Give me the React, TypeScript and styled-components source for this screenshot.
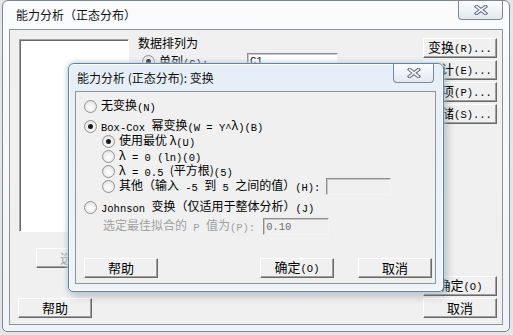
import React from 'react';
import styled, { createGlobalStyle } from 'styled-components';

const GlobalStyle = createGlobalStyle`
  html, body {
    margin: 0;
    padding: 0;
  }
  body {
    background: #e3e5e8;
    font-family: "Noto Sans CJK SC", "Liberation Sans", sans-serif;
    font-size: 12px;
    color: #000;
  }
`;

const Desktop = styled.div`
  position: relative;
  width: 513px;
  height: 335px;
  overflow: hidden;
`;

/* ---------- window chrome ---------- */

const MainWindow = styled.div`
  box-sizing: border-box;
  display: flex;
  flex-direction: column;
  width: 508px;
  height: 332px;
  margin-left: 2px;
  padding: 0 6px 6px;
  border: 1px solid #7c8794;
  border-radius: 6px 6px 5px 5px;
  background: linear-gradient(180deg, #fafbfd 0%, #f0f3f7 100%);
`;

const DialogWindow = styled.div`
  position: absolute;
  left: 68px;
  top: 63px;
  box-sizing: border-box;
  display: flex;
  flex-direction: column;
  width: 376px;
  height: 229px;
  padding: 0 7px 7px 6px;
  border: 1px solid #6d8197;
  border-radius: 6px 6px 5px 5px;
  background: linear-gradient(180deg, #e6eef7 0%, #eef4fa 100%);
  box-shadow: inset 0 0 0 1px rgba(255, 255, 255, 0.9), 0 0 4px 1px rgba(175, 215, 238, 0.9),
    3px 4px 10px rgba(0, 0, 0, 0.22);
`;

const TitleBar = styled.div<{ $h: number; $pad: number }>`
  display: flex;
  align-items: flex-start;
  height: ${p => p.$h}px;
  padding-left: ${p => p.$pad}px;
`;

const Title = styled.span<{ $h: number }>`
  line-height: ${p => p.$h}px;
  font-size: 12px;
  color: #111;
  white-space: nowrap;
`;

const CloseBox = styled.div<{ $w: number; $right?: number }>`
  display: flex;
  align-items: center;
  justify-content: center;
  width: ${p => p.$w}px;
  height: 19px;
  margin-left: auto;
  margin-right: ${p => p.$right ?? 0}px;
  box-sizing: border-box;
  border: 1px solid #7d8896;
  border-top: none;
  border-radius: 0 0 4px 4px;
  background: linear-gradient(180deg, #fbfcfd 0%, #e4e9ef 100%);
`;

const Client = styled.div<{ $column?: boolean }>`
  flex: 1;
  display: flex;
  flex-direction: ${p => (p.$column ? 'column' : 'row')};
  min-height: 0;
  border: 1px solid #8c949d;
  background: #f0f0f0;
`;

const CloseIcon = () => (
  <svg width="14" height="10" viewBox="0 0 14 10">
    <g strokeLinecap="square">
      <path d="M2.5 1.5 L11.5 8.5 M11.5 1.5 L2.5 8.5" stroke="#5f6a77" strokeWidth="3.6" />
      <path d="M2.5 1.5 L11.5 8.5 M11.5 1.5 L2.5 8.5" stroke="#f3f5f7" strokeWidth="1.6" />
    </g>
  </svg>
);

/* ---------- controls ---------- */

const Latin = styled.span<{ $shift?: number }>`
  font-family: "Liberation Mono", "DejaVu Sans Mono", monospace;
  font-size: 10.5px;
  vertical-align: ${p => p.$shift ?? -1}px;
`;

const PushButton = styled.button<{ $disabled?: boolean }>`
  display: flex;
  align-items: center;
  justify-content: center;
  width: 74px;
  height: 20px;
  padding: 0;
  box-sizing: border-box;
  border: 1px solid;
  border-color: #ffffff #696969 #696969 #ffffff;
  box-shadow: inset -1px -1px 0 #a0a0a0;
  background: #f0f0f0;
  font-family: "Noto Sans CJK SC", "Liberation Sans", sans-serif;
  font-size: 13px;
  white-space: nowrap;
  color: ${p => (p.$disabled ? '#a3a3a3' : '#000')};
`;

const ButtonLabel = styled.span`
  line-height: 18px;
`;

const TextField = styled.div<{ $w: number; $disabled?: boolean }>`
  display: flex;
  align-items: center;
  width: ${p => p.$w}px;
  height: 17px;
  box-sizing: border-box;
  padding-left: 2px;
  border: 1px solid;
  border-color: #8e8e8e #f4f4f4 #f4f4f4 #8e8e8e;
  box-shadow: inset 1px 1px 0 #c8c8c8;
  background: ${p => (p.$disabled ? '#f0f0f0' : '#ffffff')};
  color: ${p => (p.$disabled ? '#6d6d6d' : '#000')};
`;

const Radio = styled.span<{ $checked?: boolean }>`
  position: relative;
  flex: none;
  width: 13px;
  height: 13px;
  box-sizing: border-box;
  border: 1px solid #8f9296;
  border-radius: 50%;
  background: radial-gradient(circle at 50% 60%, #ffffff 0%, #f2f2f2 45%, #d6d6d6 100%);

  &::after {
    content: '';
    display: ${p => (p.$checked ? 'block' : 'none')};
    position: absolute;
    left: 3px;
    top: 3px;
    width: 5px;
    height: 5px;
    border-radius: 50%;
    background: #1c1c1c;
  }
`;

const OptionRow = styled.div<{ $indent?: number; $gap?: number }>`
  display: flex;
  align-items: center;
  gap: 4px;
  height: 15px;
  padding-left: ${p => p.$indent ?? 0}px;
  margin-top: ${p => p.$gap ?? 0}px;
  white-space: nowrap;
`;

const OptionText = styled.span<{ $muted?: boolean }>`
  font-size: 12px;
  line-height: 15px;
  color: ${p => (p.$muted ? '#a0a0a0' : '#000')};
`;

/* ---------- main dialog body ---------- */

const LeftColumn = styled.div`
  display: flex;
  flex-direction: column;
  align-items: flex-start;
  padding: 9px 0 6px 8px;
`;

const ListBox = styled.div`
  width: 110px;
  height: 193px;
  margin-left: 1px;
  box-sizing: border-box;
  border: 1px solid;
  border-color: #a0a0a0 #ffffff #ffffff #a0a0a0;
  box-shadow: inset 1px 1px 0 #696969;
  background: #ffffff;
`;

const SelectSlot = styled.div`
  margin: 16px 0 0 18px;
`;

const HelpSlot = styled.div`
  margin-top: auto;
`;

const MiddleColumn = styled.div`
  flex: 1;
  padding: 5px 0 0 9px;
`;

const GroupLabel = styled.div`
  font-size: 12px;
  line-height: 16px;
`;

const FieldRow = styled.div`
  display: flex;
  align-items: center;
  gap: 4px;
  height: 18px;
  margin-top: 1px;
  padding-left: 4px;
`;

const FieldLabel = styled.span`
  width: 84px;
  font-size: 12px;
`;

const RightColumn = styled.div`
  display: flex;
  flex-direction: column;
  gap: 2px;
  padding: 8px 5px 6px 0;
`;

const Spacer = styled.div`
  flex: 1;
`;

/* ---------- transform dialog body ---------- */

const DialogBody = styled.div`
  flex: 1;
  display: flex;
  flex-direction: column;
  padding: 7px 3px 5px 8px;
`;

const InlineField = styled.div<{ $gap: number }>`
  margin-left: ${p => p.$gap}px;
`;

const ButtonRow = styled.div`
  display: flex;
  gap: 24px;
  margin-top: auto;

  & > :nth-child(2) {
    margin-left: auto;
  }
`;

const Option: React.FC<{
  checked?: boolean;
  indent?: number;
  gap?: number;
  children: React.ReactNode;
}> = ({ checked, indent, gap, children }) => (
  <OptionRow $indent={indent} $gap={gap}>
    <Radio $checked={checked} />
    <OptionText>{children}</OptionText>
  </OptionRow>
);

const Button: React.FC<{ zh: string; keyHint?: string; disabled?: boolean }> = ({
  zh,
  keyHint,
  disabled,
}) => (
  <PushButton $disabled={disabled}>
    <ButtonLabel>
      {zh}
      {keyHint && <Latin $shift={0}>{keyHint}</Latin>}
    </ButtonLabel>
  </PushButton>
);

const sideButtons = [
  ['变换', '(R)...'],
  ['估计', '(E)...'],
  ['选项', '(P)...'],
  ['存储', '(S)...'],
];

export default function App() {
  return (
    <Desktop>
      <GlobalStyle />

      <MainWindow>
        <TitleBar $h={28} $pad={7}>
          <Title $h={28}>能力分析（正态分布）</Title>
          <CloseBox $w={45}>
            <CloseIcon />
          </CloseBox>
        </TitleBar>
        <Client>
          <LeftColumn>
            <ListBox />
            <SelectSlot>
              <Button zh="选择" disabled />
            </SelectSlot>
            <HelpSlot>
              <Button zh="帮助" />
            </HelpSlot>
          </LeftColumn>

          <MiddleColumn>
            <GroupLabel>数据排列为</GroupLabel>
            <FieldRow>
              <Radio $checked />
              <FieldLabel>
                单列<Latin>(C):</Latin>
              </FieldLabel>
              <TextField $w={91}>
                <Latin>C1</Latin>
              </TextField>
            </FieldRow>
          </MiddleColumn>

          <RightColumn>
            {sideButtons.map(([zh, key]) => (
              <Button key={zh} zh={zh} keyHint={key} />
            ))}
            <Spacer />
            <Button zh="确定" keyHint="(O)" />
            <Button zh="取消" />
          </RightColumn>
        </Client>
      </MainWindow>

      <DialogWindow>
        <TitleBar $h={27} $pad={2}>
          <Title $h={27}>能力分析 (正态分布): 变换</Title>
          <CloseBox $w={41} $right={2}>
            <CloseIcon />
          </CloseBox>
        </TitleBar>
        <Client $column>
          <DialogBody>
            <Option>
              无变换<Latin>(N)</Latin>
            </Option>
            <Option checked gap={5}>
              <Latin>Box-Cox </Latin>幂变换<Latin>(W = Y^</Latin>λ<Latin>)(B)</Latin>
            </Option>
            <Option checked indent={18}>
              使用最优 λ<Latin>(U)</Latin>
            </Option>
            <Option indent={18}>
              λ<Latin> = 0 (ln)(0)</Latin>
            </Option>
            <Option indent={18}>
              λ<Latin> = 0.5 </Latin>(平方根)<Latin>(5)</Latin>
            </Option>
            <OptionRow $indent={18}>
              <Radio />
              <OptionText>
                其他（输入<Latin> -5 </Latin>到<Latin> 5 </Latin>之间的值）<Latin>(H):</Latin>
              </OptionText>
              <InlineField $gap={2}>
                <TextField $w={65} $disabled />
              </InlineField>
            </OptionRow>
            <Option gap={6}>
              <Latin>Johnson </Latin>变换（仅适用于整体分析）<Latin>(J)</Latin>
            </Option>
            <OptionRow $indent={19} $gap={4}>
              <OptionText $muted>
                选定最佳拟合的<Latin> P </Latin>值为<Latin>(P):</Latin>
              </OptionText>
              <InlineField $gap={4}>
                <TextField $w={66} $disabled>
                  <Latin>0.10</Latin>
                </TextField>
              </InlineField>
            </OptionRow>
            <ButtonRow>
              <Button zh="帮助" />
              <Button zh="确定" keyHint="(O)" />
              <Button zh="取消" />
            </ButtonRow>
          </DialogBody>
        </Client>
      </DialogWindow>
    </Desktop>
  );
}
